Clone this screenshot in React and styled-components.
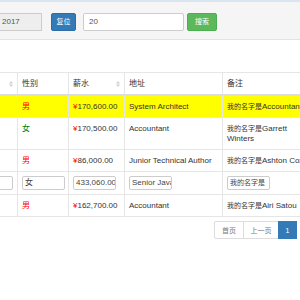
import React from 'react'
import styled, { createGlobalStyle } from 'styled-components'

const GlobalStyle = createGlobalStyle`
  html, body {
    margin: 0;
    padding: 0;
    width: 300px;
    height: 300px;
    overflow: hidden;
    background: #fff;
    font-family: "Liberation Sans", "Noto Sans CJK SC", sans-serif;
    color: #333;
  }
`

const Page = styled.div`
  width: 300px;
  height: 300px;
  overflow: hidden;
  display: flex;
  flex-direction: column;
`

const TopLine = styled.div`
  height: 2px;
  background: #d9e5f1;
`

const Toolbar = styled.div`
  height: 38px;
  background: #f5f5f5;
  border-bottom: 1px solid #e3e3e3;
  display: flex;
  align-items: flex-start;
  padding-top: 11px;
  box-sizing: border-box;
`

const DateBox = styled.div`
  width: 43px;
  height: 18px;
  margin-left: -1px;
  box-sizing: border-box;
  background: #eee;
  border: 1px solid #ccc;
  color: #555;
  font-size: 8px;
  line-height: 16px;
  padding-left: 2px;
`

const Button = styled.button`
  height: 18px;
  width: ${p => p.w}px;
  margin-left: ${p => p.ml}px;
  padding: 0;
  border: 1px solid ${p => p.green ? '#4cae4c' : '#2e6da4'};
  background: ${p => p.green ? '#5cb85c' : '#337ab7'};
  color: #fff;
  border-radius: 2px;
  font-family: inherit;
  font-size: 7px;
  line-height: 16px;
`

const SearchInput = styled.div`
  width: 101px;
  height: 18px;
  margin-left: 7px;
  box-sizing: border-box;
  background: #fff;
  border: 1px solid #ccc;
  border-radius: 2px;
  color: #555;
  font-size: 8px;
  line-height: 16px;
  padding-left: 5px;
`

const TableWrap = styled.div`
  margin-top: 32px;
  margin-left: -35px;
  width: 345px;
`

const Table = styled.table`
  width: 345px;
  table-layout: fixed;
  border-collapse: collapse;
  font-size: 8px;
  line-height: 10px;
`

const Th = styled.th`
  position: relative;
  text-align: left;
  font-weight: normal;
  height: 21px;
  padding: 0 4px;
  border: 1px solid #e6e6e6;
  border-bottom: 2px solid #ddd;
  color: #333;
  white-space: nowrap;
`

const Tr = styled.tr`
  background: ${p => p.hl ? '#ffff00' : '#fff'};
`

const Td = styled.td`
  padding: ${p => p.edit ? '4px' : '6px 4px 5px'};
  border: 1px solid #e6e6e6;
  vertical-align: top;
  white-space: ${p => p.wrap ? 'normal' : 'nowrap'};
  overflow: hidden;
  color: #333;
`

const Sex = styled.span`
  color: ${p => p.female ? '#008000' : '#ff0000'};
`

const Yen = styled.span`
  color: #ff0000;
`

const Cjk = styled.span`
  font-size: 7px;
  line-height: 10px;
`

const CellInput = styled.div`
  width: 43px;
  height: 14px;
  box-sizing: border-box;
  border: 1px solid #ccc;
  border-radius: 2px;
  background: #fff;
  color: #444;
  font-size: 8px;
  line-height: 12px;
  padding-left: 2px;
  white-space: nowrap;
  overflow: hidden;
`

const SortIcon = styled.svg`
  position: absolute;
  right: 4px;
  top: 8px;
`

const Pager = styled.div`
  display: flex;
  justify-content: flex-end;
  padding-right: 3px;
  margin-top: 4px;
`

const PageItem = styled.div`
  width: ${p => p.w}px;
  height: 18px;
  box-sizing: border-box;
  border: 1px solid ${p => p.active ? '#337ab7' : '#ddd'};
  margin-left: -1px;
  background: ${p => p.active ? '#337ab7' : '#fff'};
  color: ${p => p.active ? '#fff' : '#777'};
  font-size: 7px;
  display: flex;
  align-items: center;
  justify-content: center;
  border-radius: ${p => p.first ? '2px 0 0 2px' : '0'};
`

const Sort = () => (
  <SortIcon width='4' height='6' viewBox='0 0 4 6'>
    <path d='M2 0 L4 2.4 L0 2.4 Z' fill='#d0d0d0' />
    <path d='M2 6 L4 3.6 L0 3.6 Z' fill='#d0d0d0' />
  </SortIcon>
)

const rows = [
  { sex: '男', salary: '170,600.00', job: 'System Architect', note: 'Accountant', hl: true },
  { sex: '女', salary: '170,500.00', job: 'Accountant', note: 'Garrett Winters' },
  { sex: '男', salary: '86,000.00', job: 'Junior Technical Author', note: 'Ashton Cox' },
  { edit: true },
  { sex: '男', salary: '162,700.00', job: 'Accountant', note: 'Airi Satou' }
]

function App () {
  return (
    <Page>
      <GlobalStyle />
      <TopLine />
      <Toolbar>
        <DateBox>2017</DateBox>
        <Button w={25} ml={9}>复位</Button>
        <SearchInput>20</SearchInput>
        <Button green w={30} ml={3}>搜索</Button>
      </Toolbar>
      <TableWrap>
        <Table>
          <colgroup>
            <col style={{ width: 52 }} />
            <col style={{ width: 51 }} />
            <col style={{ width: 56 }} />
            <col style={{ width: 98 }} />
            <col style={{ width: 88 }} />
          </colgroup>
          <thead>
            <tr>
              <Th><Sort /></Th>
              <Th>性别</Th>
              <Th>薪水<Sort /></Th>
              <Th>地址</Th>
              <Th>备注</Th>
            </tr>
          </thead>
          <tbody>
            {rows.map((r, i) => r.edit
              ? (
                <Tr key={i}>
                  <Td edit><CellInput /></Td>
                  <Td edit><CellInput>女</CellInput></Td>
                  <Td edit><CellInput>433,060.00</CellInput></Td>
                  <Td edit><CellInput>Senior Java</CellInput></Td>
                  <Td edit><CellInput><Cjk>我的名字是</Cjk></CellInput></Td>
                </Tr>
                )
              : (
                <Tr key={i} hl={r.hl}>
                  <Td />
                  <Td><Sex female={r.sex === '女'}>{r.sex}</Sex></Td>
                  <Td><Yen>¥</Yen>{r.salary}</Td>
                  <Td>{r.job}</Td>
                  <Td wrap><Cjk>我的名字是</Cjk>{r.note}</Td>
                </Tr>
                ))}
          </tbody>
        </Table>
      </TableWrap>
      <Pager>
        <PageItem first w={30}>首页</PageItem>
        <PageItem w={36}>上一页</PageItem>
        <PageItem active w={19}>1</PageItem>
      </Pager>
    </Page>
  )
}

export default App
